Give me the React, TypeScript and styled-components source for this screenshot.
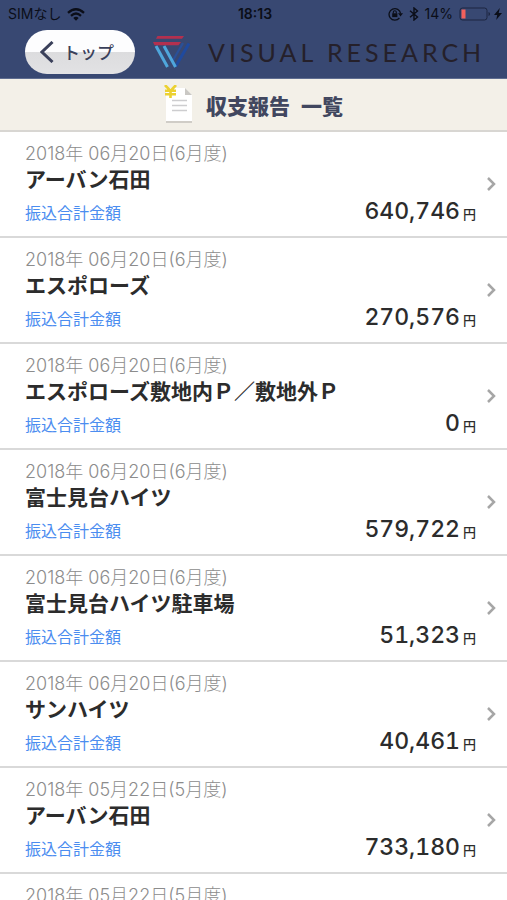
import React from "react";
import styled, { createGlobalStyle } from "styled-components";

const GlobalStyle = createGlobalStyle`
  *, *::before, *::after { box-sizing: border-box; }
  body {
    margin: 0;
    background: #fff;
    color: #2c2c2c;
    font-family: Inter, "Noto Sans CJK JP", sans-serif;
    overflow-x: hidden;
  }
`;

const Header = styled.header`
  height: 79px;
  background: #384872;
  border-bottom: 1px solid #5f6d90;
`;

const StatusBar = styled.div`
  display: grid;
  grid-template-columns: 1fr auto 1fr;
  align-items: center;
  height: 28px;
  padding: 0 5px 0 8px;
  color: #0b0e18;
  font-size: 14px;
  line-height: 20px;
`;

const StatusGroup = styled.div<{ $end?: boolean }>`
  display: flex;
  align-items: center;
  justify-content: ${(p) => (p.$end ? "flex-end" : "flex-start")};
  gap: 6px;
`;

const Clock = styled.time`
  font-weight: 600;
`;

const PowerGroup = styled.span`
  display: flex;
  align-items: center;
  gap: 3px;
`;

const NavBar = styled.nav`
  display: flex;
  align-items: center;
  height: 48px;
  padding: 0 23px 0 25px;
`;

const BackButton = styled.button`
  display: flex;
  align-items: center;
  gap: 9px;
  flex: none;
  width: 110px;
  height: 44px;
  padding: 0 0 0 15px;
  border: 0;
  border-radius: 22px;
  background: linear-gradient(#fdfdfe 50%, #dcdcde 50%, #e2e2e4 100%);
  color: #3a405a;
  font-family: "Noto Sans CJK JP", sans-serif;
  font-size: 17px;
  font-weight: 500;
  line-height: 24px;
  white-space: nowrap;
  cursor: pointer;
`;

const Brand = styled.div`
  display: flex;
  align-items: center;
  flex: 1;
  gap: 18px;
  padding-left: 18px;
  color: #25202a;
  font-family: Lato, sans-serif;
  font-size: 25px;
  line-height: 30px;
  letter-spacing: 4px;
  white-space: nowrap;
`;

const TitleBar = styled.div`
  display: flex;
  align-items: center;
  justify-content: center;
  gap: 12px;
  height: 53px;
  background: #f3f0e8;
  border-bottom: 2px solid #d8d6d2;
`;

const Title = styled.h1`
  margin: 0;
  color: #41475f;
  font-family: "Noto Sans CJK JP", sans-serif;
  font-size: 21px;
  font-weight: 900;
  line-height: 28px;
`;

const TitleSuffix = styled.span`
  margin-left: 6px;
`;

const ReportList = styled.ul`
  margin: 0;
  padding: 0;
  list-style: none;
`;

const ReportItem = styled.li`
  border-bottom: 2px solid #d9d9d9;
`;

const ReportLink = styled.a`
  display: grid;
  grid-template-columns: 1fr 12px;
  align-items: center;
  column-gap: 9px;
  height: 104px;
  padding: 0 10px 0 25px;
  color: inherit;
  text-decoration: none;
`;

const Details = styled.div`
  display: flex;
  flex-direction: column;
  align-self: start;
  padding-top: 11px;
`;

const ReportDate = styled.span`
  color: #8c8c8c;
  font-size: 18px;
  font-weight: 300;
  line-height: 22px;
`;

const PropertyName = styled.span`
  font-family: "Noto Sans CJK JP", sans-serif;
  font-size: 21px;
  font-weight: 700;
  line-height: 26px;
`;

const TotalRow = styled.span`
  display: flex;
  align-items: center;
  justify-content: space-between;
  line-height: 40px;
`;

const TotalLabel = styled.span`
  color: #4b8df0;
  font-size: 16px;
`;

const Amount = styled.span`
  font-size: 23px;
  font-weight: 500;
  font-variant-numeric: tabular-nums;
`;

const Yen = styled.span`
  margin-left: 3px;
  font-size: 13px;
`;

function WifiIcon() {
  return (
    <svg width="18" height="13" viewBox="0 0 18 13" fill="none" stroke="currentColor" strokeWidth="2.3" aria-hidden="true">
      <path d="M1 4.8Q9-2.4 17 4.8M4 7.8Q9 3.3 14 7.8" />
      <path d="M6.3 9.9Q9 7.7 11.7 9.9L9 12.7Z" fill="currentColor" stroke="none" />
    </svg>
  );
}

function RotationLockIcon() {
  return (
    <svg width="15" height="14" viewBox="0 0 15 14" fill="none" stroke="currentColor" aria-hidden="true">
      <path d="M11.4 11A5.8 5.8 0 1 1 12.6 6.5" strokeWidth="1.3" />
      <path d="M10 6.2h5l-2.5 3.2Z" fill="currentColor" stroke="none" />
      <path d="M4.2 6.3h5.2v3.8H4.2Z" fill="currentColor" stroke="none" />
      <path d="M5.3 6.5V5.2a1.5 1.5 0 0 1 3 0v1.3" strokeWidth="1.1" />
    </svg>
  );
}

function BluetoothIcon() {
  return (
    <svg width="10" height="14" viewBox="0 0 10 14" fill="none" stroke="currentColor" strokeWidth="1.4" aria-hidden="true">
      <path d="M1 3.8L8.5 10L5 13V1L8.5 4L1 10.2" />
    </svg>
  );
}

function BatteryIcon() {
  return (
    <svg width="32" height="14" viewBox="0 0 32 14" fill="none" aria-hidden="true">
      <rect x="1" y="1" width="27" height="12" rx="2.5" stroke="#1c2540" strokeWidth="1" />
      <path d="M2.5 2.5h4v9h-4Z" fill="#f2605c" />
      <path d="M29.5 5v4q1.6-.6 1.6-2t-1.6-2Z" fill="#1c2540" />
    </svg>
  );
}

function BoltIcon() {
  return (
    <svg width="8" height="12" viewBox="0 0 8 12" fill="currentColor" aria-hidden="true">
      <path d="M5.8 0L0 6.9h3.2L2.2 12L8 4.9H4.7Z" />
    </svg>
  );
}

function BackIcon() {
  return (
    <svg width="14" height="22" viewBox="0 0 14 22" fill="none" stroke="currentColor" strokeWidth="3" aria-hidden="true">
      <path d="M12.5 1L2 11L12.5 21" />
    </svg>
  );
}

function LogoMark() {
  return (
    <svg width="37" height="32" viewBox="0 0 37 32" fill="none" aria-hidden="true">
      <path d="M30 7L19.5 25" stroke="#2a5099" strokeWidth="2.2" />
      <path d="M36 7.5L22.5 30.5" stroke="#1f4a9f" strokeWidth="3" />
      <path d="M3 10L14.5 31M11 10L22.5 31" stroke="#4fa6dc" strokeWidth="3" />
      <path d="M4.5 0H31L29 2.8H3ZM0 6H28L25.5 9.2H1.5Z" fill="#b3304f" />
    </svg>
  );
}

function DocumentIcon() {
  return (
    <svg width="30" height="40" viewBox="0 0 30 40" fill="none" aria-hidden="true">
      <path d="M2 6H22L28 12V38H2Z" fill="#d0cdc7" />
      <path d="M2 3H21L28 10V36H2Z" fill="#fff" />
      <path d="M21 3L28 10H21Z" fill="#cac8c4" />
      <path d="M8 15.5H23M8 20.5H23M8 25.5H23" stroke="#cdcdcf" strokeWidth="1.3" />
      <path d="M1 0L6.5 6L12 0M6.5 6V13M1 5.8H12M1 9.3H12" stroke="#ecd131" strokeWidth="2.6" />
    </svg>
  );
}

function ChevronIcon() {
  return (
    <svg width="12" height="16" viewBox="0 0 12 16" fill="none" stroke="#a6a6a6" strokeWidth="2.5" aria-hidden="true">
      <path d="M3 2L9 8L3 14" />
    </svg>
  );
}

const reports = [
  { date: "2018年 06月20日(6月度)", name: "アーバン石田", amount: "640,746" },
  { date: "2018年 06月20日(6月度)", name: "エスポローズ", amount: "270,576" },
  { date: "2018年 06月20日(6月度)", name: "エスポローズ敷地内Ｐ／敷地外Ｐ", amount: "0" },
  { date: "2018年 06月20日(6月度)", name: "富士見台ハイツ", amount: "579,722" },
  { date: "2018年 06月20日(6月度)", name: "富士見台ハイツ駐車場", amount: "51,323" },
  { date: "2018年 06月20日(6月度)", name: "サンハイツ", amount: "40,461" },
  { date: "2018年 05月22日(5月度)", name: "アーバン石田", amount: "733,180" },
  { date: "2018年 05月22日(5月度)", name: "エスポローズ", amount: "270,576" },
];

export default function App() {
  return (
    <>
      <GlobalStyle />
      <Header>
        <StatusBar>
          <StatusGroup>
            <span>SIMなし</span>
            <WifiIcon />
          </StatusGroup>
          <Clock>18:13</Clock>
          <StatusGroup $end>
            <RotationLockIcon />
            <BluetoothIcon />
            <span>14%</span>
            <PowerGroup>
              <BatteryIcon />
              <BoltIcon />
            </PowerGroup>
          </StatusGroup>
        </StatusBar>
        <NavBar>
          <BackButton type="button">
            <BackIcon />
            トップ
          </BackButton>
          <Brand>
            <LogoMark />
            <span>VISUAL RESEARCH</span>
          </Brand>
        </NavBar>
      </Header>
      <main>
        <TitleBar>
          <DocumentIcon />
          <Title>
            収支報告 <TitleSuffix>一覧</TitleSuffix>
          </Title>
        </TitleBar>
        <ReportList>
          {reports.map((report, index) => (
            <ReportItem key={index}>
              <ReportLink href="#">
                <Details>
                  <ReportDate>{report.date}</ReportDate>
                  <PropertyName>{report.name}</PropertyName>
                  <TotalRow>
                    <TotalLabel>振込合計金額</TotalLabel>
                    <Amount>
                      {report.amount}
                      <Yen>円</Yen>
                    </Amount>
                  </TotalRow>
                </Details>
                <ChevronIcon />
              </ReportLink>
            </ReportItem>
          ))}
        </ReportList>
      </main>
    </>
  );
}
